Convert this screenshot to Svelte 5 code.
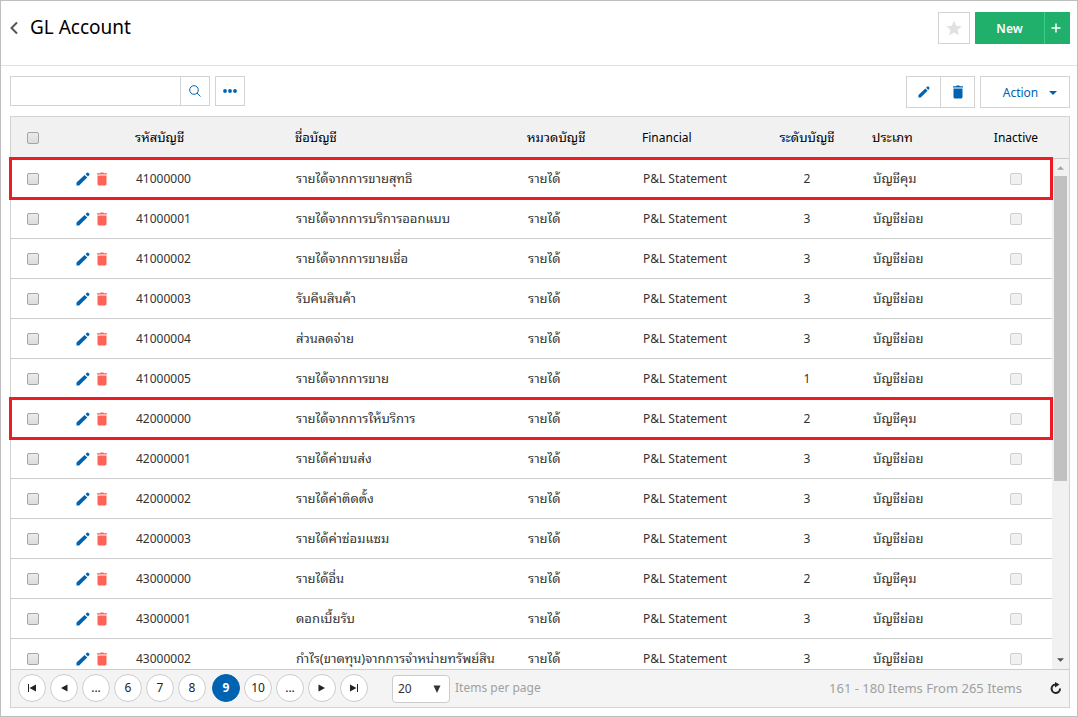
<script lang="ts">
  type Account = {
    code: string;
    name: string;
    level: number;
    type: string;
    marked?: boolean;
  };

  const CONTROL = 'บัญชีคุม';
  const SUB = 'บัญชีย่อย';

  const accounts: Account[] = [
    { code: '41000000', name: 'รายได้จากการขายสุทธิ', level: 2, type: CONTROL, marked: true },
    { code: '41000001', name: 'รายได้จากการบริการออกแบบ', level: 3, type: SUB },
    { code: '41000002', name: 'รายได้จากการขายเชื่อ', level: 3, type: SUB },
    { code: '41000003', name: 'รับคืนสินค้า', level: 3, type: SUB },
    { code: '41000004', name: 'ส่วนลดจ่าย', level: 3, type: SUB },
    { code: '41000005', name: 'รายได้จากการขาย', level: 1, type: SUB },
    { code: '42000000', name: 'รายได้จากการให้บริการ', level: 2, type: CONTROL, marked: true },
    { code: '42000001', name: 'รายได้ค่าขนส่ง', level: 3, type: SUB },
    { code: '42000002', name: 'รายได้ค่าติดตั้ง', level: 3, type: SUB },
    { code: '42000003', name: 'รายได้ค่าซ่อมแซม', level: 3, type: SUB },
    { code: '43000000', name: 'รายได้อื่น', level: 2, type: CONTROL },
    { code: '43000001', name: 'ดอกเบี้ยรับ', level: 3, type: SUB },
    { code: '43000002', name: 'กำไร(ขาดทุน)จากการจำหน่ายทรัพย์สิน', level: 3, type: SUB },
  ];

  const HEAD_HEIGHT = 42;
  const ROW_HEIGHT = 40;
  const marks = accounts.flatMap((a, i) => (a.marked ? [HEAD_HEIGHT + i * ROW_HEIGHT] : []));

  const pages = ['...', '6', '7', '8', '9', '10', '...'];
  let current = '9';
  let pageSize = '20';
  let query = '';
</script>

{#snippet pencil()}
  <svg class="pencil" viewBox="0 0 14 14" aria-hidden="true">
    <path d="M0.5 13.5v-3L8.6 2.9l2.6 2.6-8.100 8z" />
    <path d="M9.500 2.100 11 0.700q.6-.5 1.200 0l1.100 1.100q.5.600 0 1.200L12 4.600z" />
  </svg>
{/snippet}

{#snippet trash()}
  <svg class="trash" viewBox="0 0 12 14" aria-hidden="true">
    <path d="M1 1.200h3L4.700.500h2.600L8 1.200h3v1.300H1z" />
    <path d="M1.500 3.500h9V12q0 1.500-1.500 1.500H3Q1.500 13.500 1.500 12z" />
  </svg>
{/snippet}

<div class="page">
  <header class="title-bar">
    <a class="back" href="#back" aria-label="Back">
      <svg viewBox="0 0 8 14" aria-hidden="true"><polyline points="7,1.500 1.500,7 7,12.500" /></svg>
    </a>
    <h1>GL Account</h1>
    <button class="favorite" aria-label="Favorite">
      <svg viewBox="0 0 16 16" aria-hidden="true">
        <path d="M8 .5l2.200 5.300 5.600.4-4.300 3.700 1.400 5.600L8 12.500l-4.900 3 1.400-5.600L.2 6.200l5.600-.4z" />
      </svg>
    </button>
    <div class="new-group">
      <button class="new">New</button>
      <button class="plus" aria-label="Add">
        <svg viewBox="0 0 10 10" aria-hidden="true"><path d="M5 .5v9M.5 5h9" /></svg>
      </button>
    </div>
  </header>

  <div class="toolbar">
    <div class="search">
      <input type="text" aria-label="Search" bind:value={query} />
      <button aria-label="Search">
        <svg viewBox="0 0 12 12" aria-hidden="true">
          <circle cx="5" cy="5" r="4.300" />
          <path d="M8 8l3.500 3.500" />
        </svg>
      </button>
    </div>
    <button class="more" aria-label="More">
      <svg viewBox="0 0 14 4" aria-hidden="true">
        <circle cx="2" cy="2" r="1.900" /><circle cx="7" cy="2" r="1.900" /><circle cx="12" cy="2" r="1.900" />
      </svg>
    </button>
    <div class="edit-group">
      <button aria-label="Edit">{@render pencil()}</button>
      <button aria-label="Delete">{@render trash()}</button>
    </div>
    <button class="action">
      Action
      <svg viewBox="0 0 8 4" aria-hidden="true"><path d="M0 0h8L4 4z" /></svg>
    </button>
  </div>

  <div class="grid">
    <div class="content">
      <div class="viewport">
        <table>
          <colgroup>
            <col class="c-check" />
            <col class="c-tools" />
            <col class="c-code" />
            <col />
            <col class="c-category" />
            <col class="c-financial" />
            <col class="c-level" />
            <col class="c-type" />
            <col class="c-inactive" />
          </colgroup>
          <thead>
            <tr>
              <th class="center"><input type="checkbox" aria-label="Select all" /></th>
              <th></th>
              <th class="thai">รหัสบัญชี</th>
              <th class="thai">ชื่อบัญชี</th>
              <th class="thai">หมวดบัญชี</th>
              <th>Financial</th>
              <th class="center thai">ระดับบัญชี</th>
              <th class="thai">ประเภท</th>
              <th class="center">Inactive</th>
            </tr>
          </thead>
          <tbody>
            {#each accounts as account}
              <tr>
                <td class="center"><input type="checkbox" aria-label="Select {account.code}" /></td>
                <td>
                  <div class="tools">
                    <button aria-label="Edit {account.code}">{@render pencil()}</button>
                    <button class="delete" aria-label="Delete {account.code}">{@render trash()}</button>
                  </div>
                </td>
                <td>{account.code}</td>
                <td class="thai">{account.name}</td>
                <td class="thai">รายได้</td>
                <td>P&amp;L Statement</td>
                <td class="center">{account.level}</td>
                <td class="thai">{account.type}</td>
                <td class="center">
                  <input type="checkbox" disabled aria-label="Inactive {account.code}" />
                </td>
              </tr>
            {/each}
          </tbody>
        </table>
      </div>
      <div class="side">
        <div class="side-head"></div>
        <div class="scrollbar">
          <svg class="up" viewBox="0 0 8 4" aria-hidden="true"><path d="M0 4h8L4 0z" /></svg>
          <div class="track"><div class="thumb"></div></div>
          <svg class="down" viewBox="0 0 8 4" aria-hidden="true"><path d="M0 0h8L4 4z" /></svg>
        </div>
      </div>
      {#each marks as top}
        <div class="mark" style="top: {top}px"></div>
      {/each}
    </div>

    <footer class="pager">
      <button aria-label="First page">
        <svg viewBox="0 0 8 8" aria-hidden="true"><path d="M0 0h1v8H0zM8 .5v7L1.500 4z" /></svg>
      </button>
      <button aria-label="Previous page">
        <svg viewBox="0 0 8 8" aria-hidden="true"><path d="M7.500 .5v7L1 4z" /></svg>
      </button>
      {#each pages as page}
        <button class:current={page === current} on:click={() => (current = page)}>{page}</button>
      {/each}
      <button aria-label="Next page">
        <svg viewBox="0 0 8 8" aria-hidden="true"><path d="M.5 .5v7L7 4z" /></svg>
      </button>
      <button aria-label="Last page">
        <svg viewBox="0 0 8 8" aria-hidden="true"><path d="M7 0h1v8H7zM0 .5v7L6.500 4z" /></svg>
      </button>
      <div class="page-size">
        <select id="page-size" bind:value={pageSize}>
          <option>10</option>
          <option>20</option>
          <option>50</option>
        </select>
        <svg viewBox="0 0 8 8" aria-hidden="true"><path d="M.5 .5h7L4 8z" /></svg>
      </div>
      <label for="page-size">Items per page</label>
      <span class="summary">161 - 180 Items From 265 Items</span>
      <button class="refresh" aria-label="Refresh">
        <svg viewBox="0 0 12 12" aria-hidden="true">
          <path class="arc" d="M5.500 2.500A4.200 4.200 0 1 0 10 6.500" />
          <path class="tip" d="M5 0l4.500 2.600L5 5.400z" />
        </svg>
      </button>
    </footer>
  </div>
</div>

<style>
  :global(body) {
    background: #fff;
  }

  .page {
    box-sizing: border-box;
    display: flex;
    flex-direction: column;
    height: 100vh;
    border: 1px solid #bfbfbf;
    color: #333;
    font-family: 'Noto Sans', 'Noto Sans Thai Looped', Loma, Waree, 'Noto Sans Thai', sans-serif;
    font-size: 12px;
    line-height: 16px;
  }

  button,
  input,
  select {
    box-sizing: border-box;
    margin: 0;
    font: inherit;
  }

  button {
    display: flex;
    align-items: center;
    justify-content: center;
    padding: 0;
    border: 1px solid #d3d3d3;
    background: #fff;
    color: #0063b1;
    cursor: pointer;
  }

  svg {
    display: block;
    fill: currentColor;
  }

  .title-bar {
    display: flex;
    align-items: flex-start;
    height: 53px;
    padding: 11px 7px 0 9px;
    border-bottom: 1px solid #e1e1e1;
  }

  .back {
    margin-top: 9px;
    color: #555;
  }
  .back svg {
    width: 8px;
    height: 14px;
    fill: none;
    stroke: currentColor;
    stroke-width: 2px;
  }

  h1 {
    flex: 1;
    margin: 0 0 0 12px;
    color: #000;
    font-size: 19px;
    font-weight: 400;
    line-height: 30px;
  }

  .favorite {
    width: 32px;
    height: 32px;
    margin-right: 5px;
    color: #e1e1e1;
  }
  .favorite svg {
    width: 16px;
    height: 16px;
  }

  .new-group {
    display: flex;
  }
  .new-group button {
    height: 32px;
    border: 0;
    background: #21b06b;
    color: #fff;
  }
  .new-group .new {
    width: 69px;
    padding-top: 1px;
    font-weight: 600;
  }
  .new-group .plus {
    width: 26px;
    padding-right: 3px;
    border-left: 1px solid #35d087;
  }
  .plus svg {
    width: 10px;
    height: 10px;
    stroke: #fff;
    stroke-width: 1.5px;
  }

  .toolbar {
    display: flex;
    align-items: flex-start;
    height: 40px;
    padding: 10px 7px 0 9px;
  }

  .search {
    display: flex;
    width: 200px;
    height: 30px;
    margin-right: 5px;
  }
  .search input {
    flex: 1;
    min-width: 0;
    padding: 0 8px;
    border: 1px solid #d3d3d3;
    border-right: 0;
    outline: 0;
  }
  .search button {
    width: 30px;
  }
  .search svg {
    width: 12px;
    height: 12px;
    fill: none;
    stroke: currentColor;
  }

  .more {
    width: 30px;
    height: 30px;
    margin-right: auto;
  }
  .more svg {
    width: 14px;
    height: 4px;
  }

  .edit-group {
    display: flex;
    margin-right: 5px;
  }
  .edit-group button {
    width: 35px;
    height: 32px;
  }
  .edit-group button + button {
    width: 34px;
    border-left: 0;
  }
  .edit-group .pencil {
    width: 12px;
    height: 12px;
  }

  .action {
    gap: 11px;
    width: 90px;
    height: 32px;
    padding: 1px 0 0 10px;
  }
  .action svg {
    width: 8px;
    height: 4px;
  }

  .pencil {
    width: 14px;
    height: 14px;
  }
  .trash {
    width: 12px;
    height: 14px;
  }

  .grid {
    display: flex;
    flex: 1;
    flex-direction: column;
    min-height: 0;
    margin: 0 7px 8px 9px;
    border: 1px solid #d3d3d3;
  }

  .content {
    position: relative;
    display: flex;
    flex: 1;
    min-height: 0;
  }

  .viewport {
    flex: 1;
    min-width: 0;
    overflow: hidden;
  }

  table {
    width: 100%;
    border-spacing: 0;
    table-layout: fixed;
  }
  .c-check {
    width: 44px;
  }
  .c-tools {
    width: 70px;
  }
  .c-code {
    width: 160px;
  }
  .c-category {
    width: 115px;
  }
  .c-financial {
    width: 120px;
  }
  .c-level {
    width: 110px;
  }
  .c-type {
    width: 118px;
  }
  .c-inactive {
    width: 72px;
  }

  th,
  td {
    box-sizing: border-box;
    height: 40px;
    padding: 0 0 0 11px;
    border-bottom: 1px solid #ccc;
    text-align: left;
    white-space: nowrap;
  }
  th {
    height: 42px;
    padding-left: 10px;
    background: #f1f1f1;
    color: #000;
    font-weight: 400;
  }
  .center {
    padding: 0;
    text-align: center;
  }
  .thai {
    padding-bottom: 2px;
    font-size: 13px;
  }

  input[type='checkbox'] {
    appearance: none;
    width: 12px;
    height: 12px;
    border: 1px solid #a5a5a5;
    border-radius: 2px;
    background: linear-gradient(#ebebeb, #dcdcdc);
    vertical-align: middle;
  }
  input[type='checkbox']:disabled {
    border-color: #cfcfcf;
    background: #f1f1f1;
  }

  .tools {
    display: flex;
    gap: 6px;
    padding-left: 10px;
  }
  .tools button {
    border: 0;
    background: none;
  }
  .tools .delete {
    color: #ff6358;
  }

  .side {
    display: flex;
    flex-direction: column;
    width: 17px;
  }
  .side-head {
    box-sizing: border-box;
    height: 42px;
    border-bottom: 1px solid #ccc;
    background: #f1f1f1;
  }
  .scrollbar {
    display: flex;
    flex: 1;
    flex-direction: column;
    align-items: center;
    padding: 7px 0;
    background: #f1f1f1;
  }
  .scrollbar svg {
    width: 7px;
    height: 4px;
  }
  .scrollbar .up {
    color: #a3a3a3;
  }
  .scrollbar .down {
    color: #505050;
  }
  .track {
    flex: 1;
    width: 13px;
    padding: 6px 0;
  }
  .thumb {
    height: 64%;
    background: #c1c1c1;
  }

  /* attention frame drawn over a whole row */
  .mark {
    position: absolute;
    left: -2px;
    right: 16px;
    box-sizing: border-box;
    height: 43px;
    margin-top: -2px;
    border: 3px solid #ed1c24;
  }

  .pager {
    box-sizing: border-box;
    display: flex;
    align-items: center;
    gap: 4px;
    height: 38px;
    padding: 0 7px 2px;
    border-top: 1px solid #ccc;
    background: #f4f4f4;
  }
  .pager button {
    width: 28px;
    height: 28px;
    border-color: #ccc;
    border-radius: 50%;
    color: #222;
  }
  .pager button svg {
    width: 8px;
    height: 8px;
  }
  .pager .current {
    margin-left: 2px;
    border-color: #0063b1;
    background: #0063b1;
    color: #fff;
    font-weight: 700;
  }

  .page-size {
    display: grid;
    align-items: center;
    margin: 2px 1px 0 20px;
  }
  .page-size select,
  .page-size svg {
    grid-area: 1 / 1;
  }
  .page-size select {
    width: 58px;
    height: 28px;
    padding: 0 5px;
    border: 1px solid #ccc;
    border-radius: 4px;
    appearance: none;
    background: #fff;
    color: #333;
  }
  .page-size svg {
    justify-self: end;
    width: 8px;
    height: 8px;
    margin-right: 9px;
    pointer-events: none;
  }

  label,
  .summary {
    color: #a0a0a0;
  }
  .summary {
    margin-left: auto;
    font-size: 13px;
  }
  .pager .refresh {
    width: 12px;
    margin-left: 24px;
    border: 0;
    background: none;
  }
  .pager .refresh svg {
    width: 12px;
    height: 12px;
  }
  .arc {
    fill: none;
    stroke: currentColor;
    stroke-width: 2px;
  }
</style>
